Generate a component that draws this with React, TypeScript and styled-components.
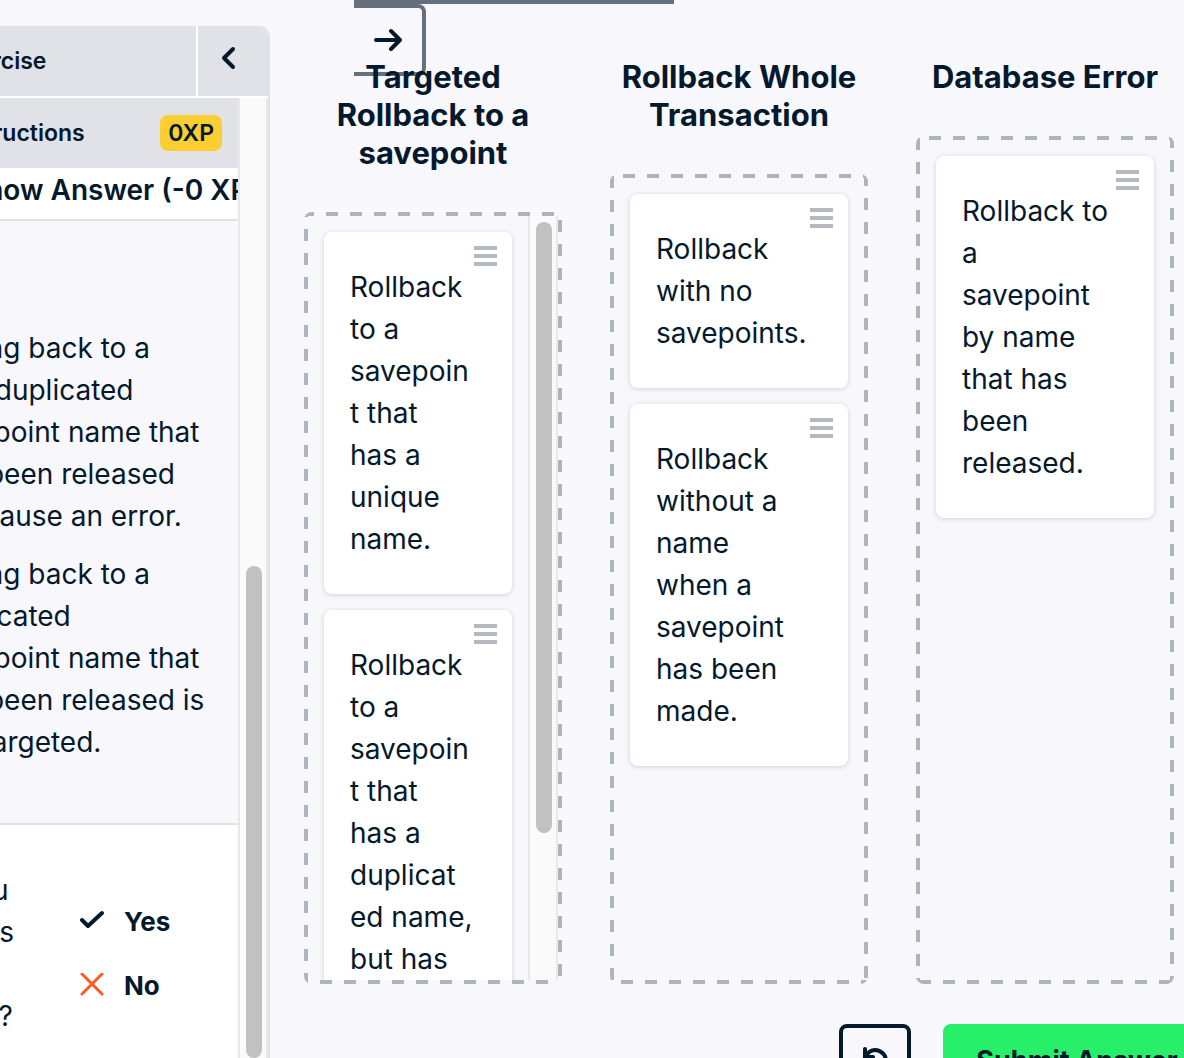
import React from "react";
import styled, { createGlobalStyle } from "styled-components";

const ink = "#05192d";
const slate = "#65707c";
const dash = "#acb4bd";
const page = "#f7f7fc";
const line = "#e1e2e7";

const Global = createGlobalStyle`
  * { box-sizing: border-box; }
  body {
    margin: 0;
    background: ${page};
    color: ${ink};
    font-family: Inter, "Liberation Sans", sans-serif;
  }
  button { font: inherit; color: inherit; cursor: pointer; }
`;

const Page = styled.div`
  display: flex;
  height: 100vh;
  overflow: hidden;
`;

/* Side panel, slid partly past the left edge of the window */
const Side = styled.aside`
  flex: 0 0 390px;
  margin: 26px 0 0 -120px;
  display: flex;
  flex-direction: column;
  border-right: 2px solid ${line};
  border-radius: 0 10px 0 0;
  overflow: hidden;
`;

const SideHeader = styled.header`
  display: flex;
  flex: 0 0 72px;
  gap: 2px;
  background: #fff;
  border-bottom: 2px solid #fff;
`;

const SideTitle = styled.h1`
  flex: 1;
  margin: 0;
  padding-left: 72px;
  background: ${line};
  font-size: 23px;
  font-weight: 600;
  line-height: 70px;
`;

const Collapse = styled.button`
  display: grid;
  place-items: center;
  width: 70px;
  padding: 0 8px 6px 0;
  border: 0;
  background: ${line};
`;

const SideBody = styled.div`
  display: flex;
  flex: 1;
  min-height: 0;
`;

const SideContent = styled.div`
  flex: 1;
  min-width: 0;
  overflow: hidden;
`;

const SectionBar = styled.div`
  display: flex;
  align-items: center;
  justify-content: space-between;
  height: 70px;
  padding: 0 16px 0 72px;
  background: ${line};
`;

const SectionTitle = styled.h2`
  margin: 0;
  font-size: 23px;
  font-weight: 600;
`;

const Points = styled.span`
  padding: 0 8px;
  border-radius: 8px;
  background: #fcce32;
  font-size: 23px;
  font-weight: 600;
  line-height: 36px;
`;

const ShowAnswer = styled.button`
  display: block;
  width: 100%;
  height: 53px;
  padding: 0 0 8px 88px;
  border: 0;
  border-bottom: 2px solid ${line};
  background: #fff;
  font-size: 28px;
  font-weight: 600;
  text-align: left;
  white-space: nowrap;
`;

const Notes = styled.ul`
  display: flex;
  flex-direction: column;
  gap: 16px;
  margin: 0;
  padding: 106px 0 60px 52px;
  list-style: none;
  border-bottom: 2px solid ${line};
`;

const copy = `
  font-size: 28px;
  line-height: 42px;
  white-space: pre;
`;

const Note = styled.li`
  ${copy}
`;

const Feedback = styled.section`
  display: flex;
  height: 100%;
  background: #fff;
`;

const Question = styled.p`
  ${copy}
  flex: 0 0 172px;
  margin: 0;
  padding: 44px 0 0 28px;
`;

const Answers = styled.div`
  padding: 64px 0 0 28px;
`;

const Answer = styled.button`
  display: flex;
  align-items: center;
  gap: 20px;
  height: 64px;
  padding: 0;
  border: 0;
  background: none;
  font-size: 26px;
  font-weight: 700;
`;

const Track = styled.div`
  flex: 0 0 30px;
  padding-left: 6px;
  border: solid #e8e8e8;
  border-width: 0 2px;
  background: #fafafa;
`;

const Thumb = styled.div<{ $top: number; $length: string }>`
  width: 16px;
  height: ${(p) => p.$length};
  margin-top: ${(p) => p.$top}px;
  border-radius: 8px;
  background: #c1c1c1;
`;

const Main = styled.main`
  flex: 1;
  min-width: 0;
`;

const Pager = styled.nav`
  width: 320px;
  height: 58px;
  margin-left: 84px;
  border-top: 4px solid ${slate};
`;

const Next = styled.button`
  display: grid;
  place-items: center;
  width: 72px;
  height: 72px;
  padding: 0;
  border: 4px solid ${slate};
  border-left: 0;
  border-radius: 0 8px 8px 0;
  background: none;
`;

const Board = styled.div`
  display: grid;
  grid-template-columns: repeat(3, minmax(0, 1fr));
  gap: 48px;
  height: calc(100vh - 132px);
  padding: 0 10px 0 34px;
`;

const Column = styled.section`
  display: flex;
  flex-direction: column;
  gap: 40px;
  min-height: 0;
`;

const ColumnTitle = styled.h2`
  margin: 0 -12px;
  font-size: 31px;
  font-weight: 700;
  line-height: 38px;
  text-align: center;
  white-space: pre-line;
`;

type Phase = [number, number, number, number];
const across = `repeating-linear-gradient(90deg, ${dash} 0 12px, transparent 12px 24px)`;
const down = `repeating-linear-gradient(180deg, ${dash} 0 12px, transparent 12px 24px)`;

const Zone = styled.div<{ $phase: Phase }>`
  display: flex;
  flex: 1;
  min-height: 0;
  padding: 4px;
  border-radius: 8px;
  background-image: ${across}, ${down}, ${across}, ${down};
  background-size: 24px 4px, 4px 24px, 24px 4px, 4px 24px;
  background-repeat: repeat-x, repeat-y, repeat-x, repeat-y;
  background-position:
    ${(p) => p.$phase[0]}px top,
    right ${(p) => p.$phase[1]}px,
    ${(p) => p.$phase[2]}px bottom,
    left ${(p) => p.$phase[3]}px;
`;

const Cards = styled.ul`
  display: flex;
  flex: 1;
  flex-direction: column;
  gap: 16px;
  min-width: 0;
  margin: 0;
  padding: 16px;
  overflow: hidden;
  list-style: none;
`;

const Card = styled.li`
  ${copy}
  position: relative;
  flex: none;
  padding: 34px 26px;
  border-radius: 8px;
  background: #fff;
  box-shadow: 0 1px 5px rgba(5, 25, 45, 0.16);
`;

const Handle = styled.button`
  position: absolute;
  top: 14px;
  right: 15px;
  display: grid;
  gap: 4px;
  width: 23px;
  padding: 0;
  border: 0;
  background: none;
`;

const Grip = styled.span`
  height: 4px;
  background: #b4bac0;
`;

const Actions = styled.footer`
  display: flex;
  justify-content: flex-end;
  gap: 32px;
  margin: 40px -27px 0 0;
`;

const Reset = styled.button`
  display: grid;
  place-items: center;
  width: 72px;
  height: 72px;
  padding: 0;
  border: 4px solid ${ink};
  border-radius: 8px;
  background: none;
`;

const Submit = styled.button`
  width: 268px;
  height: 72px;
  padding: 0;
  border: 0;
  border-radius: 8px;
  background: #28ef69;
  font-size: 27px;
  font-weight: 700;
  white-space: nowrap;
`;

const Stroke = ({ w, h, d, color = ink, width = 4 }: { w: number; h: number; d: string; color?: string; width?: number }) => (
  <svg width={w} height={h} viewBox={`0 0 ${w} ${h}`} fill="none" stroke={color} strokeWidth={width} strokeLinecap="round" strokeLinejoin="round" aria-hidden="true">
    <path d={d} />
  </svg>
);

const notes = [
  "Rolling back to a\nnon-duplicated\nsavepoint name that\nhas been released\nwill cause an error.",
  "Rolling back to a\nduplicated\nsavepoint name that\nhas been released is\nnot targeted.",
];

const columns: { title: string; phase: Phase; scroll?: boolean; cards: string[] }[] = [
  {
    title: "Targeted\nRollback to a\nsavepoint",
    phase: [22, 8, 16, 17],
    scroll: true,
    cards: [
      "Rollback\nto a\nsavepoin\nt that\nhas a\nunique\nname.",
      "Rollback\nto a\nsavepoin\nt that\nhas a\nduplicat\ned name,\nbut has\nbeen\nreleased.",
    ],
  },
  {
    title: "Rollback Whole\nTransaction",
    phase: [13, 0, 11, 2],
    cards: [
      "Rollback\nwith no\nsavepoints.",
      "Rollback\nwithout a\nname\nwhen a\nsavepoint\nhas been\nmade.",
    ],
  },
  {
    title: "Database Error",
    phase: [13, 0, 3, 2],
    cards: ["Rollback to\na\nsavepoint\nby name\nthat has\nbeen\nreleased."],
  },
];

export default function App() {
  return (
    <Page>
      <Global />
      <Side>
        <SideHeader>
          <SideTitle>Exercise</SideTitle>
          <Collapse aria-label="Collapse panel">
            <Stroke w={16} h={24} d="M12 3 3 12l9 9" />
          </Collapse>
        </SideHeader>
        <SideBody>
          <SideContent>
            <SectionBar>
              <SectionTitle>Instructions</SectionTitle>
              <Points>0XP</Points>
            </SectionBar>
            <ShowAnswer>Show Answer (-0 XP)</ShowAnswer>
            <Notes>
              {notes.map((n) => (
                <Note key={n}>{n}</Note>
              ))}
            </Notes>
            <Feedback>
              <Question>{"Did you\nfind this\nhint\nhelpful?"}</Question>
              <Answers>
                <Answer>
                  <Stroke w={24} h={24} d="m2 11 6 6L22 4" />
                  Yes
                </Answer>
                <Answer>
                  <Stroke w={24} h={24} width={3} color="#ff5a26" d="m2 1 20 20M22 1 2 21" />
                  No
                </Answer>
              </Answers>
            </Feedback>
          </SideContent>
          <Track>
            <Thumb $top={468} $length="calc(100% - 468px)" />
          </Track>
        </SideBody>
      </Side>
      <Main>
        <Pager>
          <Next aria-label="Next">
            <Stroke w={28} h={24} d="M2 12h24M17 3l9 9-9 9" />
          </Next>
        </Pager>
        <Board>
          {columns.map((c) => (
            <Column key={c.title}>
              <ColumnTitle>{c.title}</ColumnTitle>
              <Zone $phase={c.phase}>
                <Cards>
                  {c.cards.map((text) => (
                    <Card key={text}>
                      {text}
                      <Handle aria-label="Move card">
                        <Grip />
                        <Grip />
                        <Grip />
                      </Handle>
                    </Card>
                  ))}
                </Cards>
                {c.scroll && (
                  <Track>
                    <Thumb $top={6} $length="80%" />
                  </Track>
                )}
              </Zone>
            </Column>
          ))}
        </Board>
        <Actions>
          <Reset aria-label="Reset">
            <Stroke w={28} h={28} d="M4 3v8h8M4 11C7 6 10 4 14 4a11 11 0 0 1 0 22" />
          </Reset>
          <Submit>Submit Answer</Submit>
        </Actions>
      </Main>
    </Page>
  );
}
